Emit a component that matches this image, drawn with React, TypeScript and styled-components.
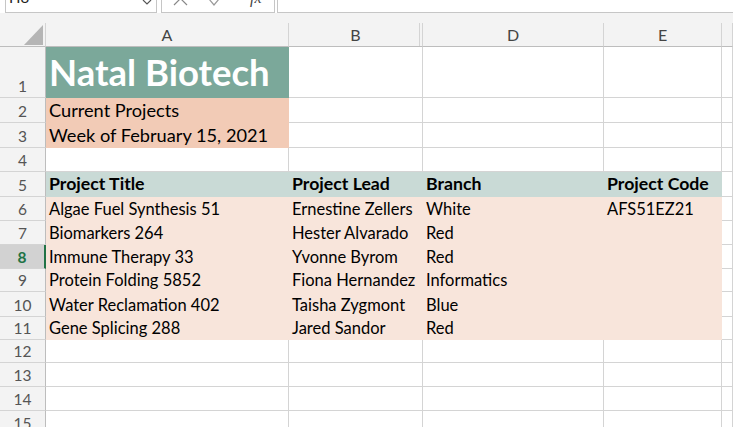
import React from "react";
import styled, { createGlobalStyle } from "styled-components";

const GRID = "#d4d4d4";
const HEAD_BG = "#f3f3f3";
const HEAD_EDGE = "#bdbdbd";
const TEAL = "#7ba89a";
const PEACH = "#f2cbb6";
const HEADER_FILL = "#c9dad6";
const ROW_FILL = "#f8e5db";

const ROW_HEIGHTS = [51, 25, 25, 24, 25, 24, 24, 24, 23, 25, 23, 23, 24, 24, 24];
const COLUMNS = [
  { label: "A", hiddenAfter: false },
  { label: "B", hiddenAfter: true },
  { label: "D", hiddenAfter: false },
  { label: "E", hiddenAfter: false },
  { label: "", hiddenAfter: false },
];

type Variant = "title" | "sub" | "bold" | "plain";
interface CellSpec {
  text?: string;
  fill?: string;
  variant?: Variant;
}

const FONT_SIZES: Record<Variant, string> = {
  title: "36.5px",
  sub: "18.2px",
  bold: "17.7px",
  plain: "16.5px",
};

const projects = [
  ["Algae Fuel Synthesis 51", "Ernestine Zellers", "White", "AFS51EZ21"],
  ["Biomarkers 264", "Hester Alvarado", "Red", ""],
  ["Immune Therapy 33", "Yvonne Byrom", "Red", ""],
  ["Protein Folding 5852", "Fiona Hernandez", "Informatics", ""],
  ["Water Reclamation 402", "Taisha Zygmont", "Blue", ""],
  ["Gene Splicing 288", "Jared Sandor", "Red", ""],
];

const buildRows = (): CellSpec[][] => {
  const empty = (): CellSpec[] => [{}, {}, {}, {}, {}];
  const rows: CellSpec[][] = [];
  const r1 = empty();
  r1[0] = { text: "Natal Biotech", fill: TEAL, variant: "title" };
  rows.push(r1);
  const r2 = empty();
  r2[0] = { text: "Current Projects", fill: PEACH, variant: "sub" };
  rows.push(r2);
  const r3 = empty();
  r3[0] = { text: "Week of February 15, 2021", fill: PEACH, variant: "sub" };
  rows.push(r3);
  rows.push(empty());
  const heads = ["Project Title", "Project Lead", "Branch", "Project Code"];
  rows.push([...heads.map((t) => ({ text: t, fill: HEADER_FILL, variant: "bold" as Variant })), {}]);
  projects.forEach((p) => {
    rows.push([...p.map((t) => ({ text: t, fill: ROW_FILL })), {}]);
  });
  while (rows.length < ROW_HEIGHTS.length) rows.push(empty());
  return rows;
};

const GlobalStyle = createGlobalStyle`
  html, body {
    margin: 0;
    padding: 0;
    background: #fff;
    overflow: hidden;
  }
  body {
    font-family: "Lato", "Noto Sans", sans-serif;
  }
`;

const Page = styled.div`
  width: 733px;
  height: 427px;
  overflow: hidden;
  background: #fff;
`;

const FormulaBar = styled.div`
  display: flex;
  align-items: flex-end;
  height: 13px;
  overflow: hidden;
  padding-left: 5px;
  background: #fff;
`;

const NameBox = styled.div`
  flex: 0 0 152px;
  height: 30px;
  box-sizing: border-box;
  border: 1px solid #c6c6c6;
  display: flex;
  align-items: flex-end;
  justify-content: space-between;
  padding: 0 4px 7px 3px;
  font-size: 15px;
  line-height: 1;
  color: #222;
`;

const ActionBox = styled.div`
  flex: 0 0 114px;
  margin-left: 4px;
  height: 30px;
  box-sizing: border-box;
  border: 1px solid #c6c6c6;
  display: flex;
  align-items: flex-end;
  gap: 20px;
  padding: 0 0 6px 11px;
`;

const Fx = styled.span`
  font-family: "Liberation Serif", serif;
  font-style: italic;
  font-size: 16px;
  line-height: 1;
  color: #444;
  margin-left: 10px;
`;

const FormulaInput = styled.div`
  flex: 1;
  margin-left: 2px;
  height: 30px;
  box-sizing: border-box;
  border: 1px solid #c6c6c6;
  border-right: none;
  background: #fff;
`;

const HeaderGap = styled.div`
  height: 10px;
  background: ${HEAD_BG};
`;

const Sheet = styled.div`
  display: grid;
  grid-template-columns: 46px 243px 134px 181px 118px 1fr;
  grid-template-rows: 24px ${ROW_HEIGHTS.map((h) => `${h}px`).join(" ")};
`;

const Corner = styled.div`
  box-sizing: border-box;
  background: ${HEAD_BG};
  border-right: 1px solid ${GRID};
  border-bottom: 1px solid ${HEAD_EDGE};
  display: flex;
  align-items: flex-end;
  justify-content: flex-end;
  padding: 0 2px 1px 0;
`;

const ColHead = styled.div<{ $hiddenAfter?: boolean }>`
  box-sizing: border-box;
  background: ${HEAD_BG};
  border-right: 1px solid ${GRID};
  border-bottom: 1px solid ${HEAD_EDGE};
  box-shadow: ${(p) => (p.$hiddenAfter ? `inset -2px 0 0 ${HEAD_BG}, inset -3px 0 0 ${GRID}` : "none")};
  display: flex;
  align-items: center;
  justify-content: center;
  font-size: 16px;
  color: #444;
  line-height: 1;
`;

const RowHead = styled.div<{ $active?: boolean }>`
  box-sizing: border-box;
  display: flex;
  align-items: flex-end;
  justify-content: center;
  padding-bottom: 3px;
  background: ${(p) => (p.$active ? "#d2d2d2" : HEAD_BG)};
  border-bottom: 1px solid ${GRID};
  border-right: ${(p) => (p.$active ? "2px solid #217346" : `1px solid ${HEAD_EDGE}`)};
  font-size: 15.5px;
  line-height: 1;
  font-weight: ${(p) => (p.$active ? 700 : 400)};
  color: ${(p) => (p.$active ? "#217346" : "#555")};
`;

const Cell = styled.div<{ $fill?: string; $variant?: Variant }>`
  box-sizing: border-box;
  min-width: 0;
  display: flex;
  align-items: flex-end;
  padding: 0 3px ${(p) => (p.$variant === "title" ? "7px" : "3px")};
  background: ${(p) => p.$fill ?? "#fff"};
  border-right: 1px solid ${(p) => p.$fill ?? GRID};
  border-bottom: 1px solid ${(p) => p.$fill ?? GRID};
  white-space: nowrap;
  font-size: ${(p) => FONT_SIZES[p.$variant ?? "plain"]};
  font-weight: ${(p) => (p.$variant === "title" || p.$variant === "bold" ? 700 : 400)};
  color: ${(p) => (p.$variant === "title" ? "#fff" : "#000")};
  line-height: 1;
`;

const App: React.FC = () => {
  const rows = buildRows();
  return (
    <Page>
      <GlobalStyle />
      <FormulaBar>
        <NameBox>
          <span>H8</span>
          <svg width="10" height="6" viewBox="0 0 10 6">
            <path d="M1 1 L5 5 L9 1" fill="none" stroke="#555" strokeWidth="1.2" />
          </svg>
        </NameBox>
        <ActionBox>
          <svg width="15" height="15" viewBox="0 0 15 15">
            <path d="M1 1 L14 14 M14 1 L1 14" stroke="#888" strokeWidth="1.2" />
          </svg>
          <svg width="12" height="15" viewBox="0 0 12 15">
            <path d="M1 8 L6 14 L11 8" fill="none" stroke="#999" strokeWidth="1.2" />
          </svg>
          <Fx>fx</Fx>
        </ActionBox>
        <FormulaInput />
      </FormulaBar>
      <HeaderGap />
      <Sheet>
        <Corner>
          <svg width="19" height="20" viewBox="0 0 19 20">
            <polygon points="19,0 19,20 0,20" fill="#b5b5b5" />
          </svg>
        </Corner>
        {COLUMNS.map((c, i) => (
          <ColHead key={i} $hiddenAfter={c.hiddenAfter}>
            {c.label}
          </ColHead>
        ))}
        {rows.map((cells, r) => (
          <React.Fragment key={r}>
            <RowHead $active={r + 1 === 8}>{r + 1}</RowHead>
            {cells.map((cell, c) => (
              <Cell key={c} $fill={cell.fill} $variant={cell.variant}>
                {cell.text}
              </Cell>
            ))}
          </React.Fragment>
        ))}
      </Sheet>
    </Page>
  );
};

export default App;
